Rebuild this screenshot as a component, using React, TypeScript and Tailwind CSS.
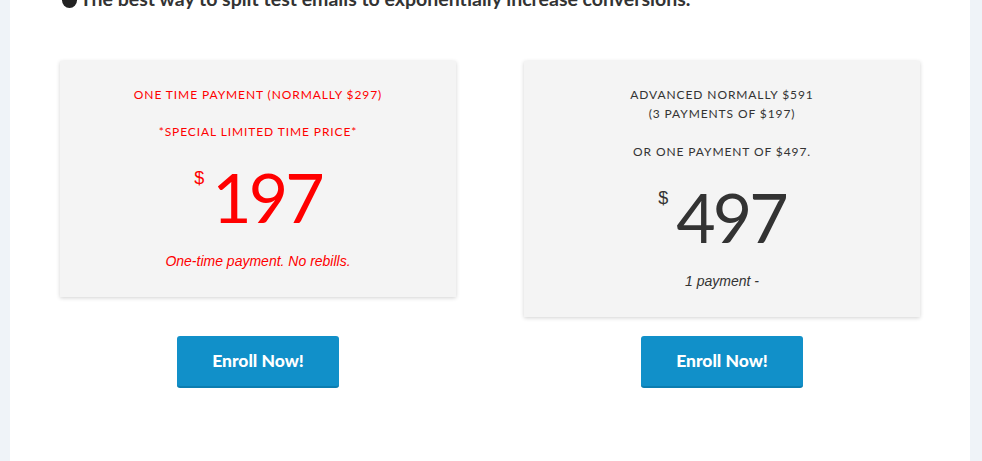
import React from "react";

const Card = ({ red, lines, price, note }: { red?: boolean; lines: React.ReactNode; price: string; note: string }) => {
  const color = red ? "text-[#ff0000]" : "text-[#333333]";
  return (
    <div className="bg-[#f4f4f4] shadow-[0_1px_4px_rgba(0,0,0,0.18)] pt-[24px] pb-[27px] flex flex-col items-center">
      <div className={`font-['Lato',sans-serif] text-[12px] uppercase tracking-[0.9px] leading-[19px] text-center ${color}`}>
        {lines}
      </div>
      <div className={`flex items-start mt-[20px] font-['Lato',sans-serif] ${color}`}>
        <span className="text-[18px] leading-none mt-[8px] mr-[8px] font-['Liberation_Sans',sans-serif]">$</span>
        <span className="text-[68px] leading-[72px] tracking-[-3px]">{price}</span>
      </div>
      <p className={`mt-[19px] font-['Liberation_Sans',sans-serif] italic text-[14px] leading-[18px] ${color}`}>
        {note}
      </p>
    </div>
  );
};

const EnrollButton = () => (
  <button className="w-[162px] h-[52px] rounded-[3px] bg-[#1190c9] border-b-2 border-[#0c7db0] text-white font-['Lato',sans-serif] font-black text-[17.5px]">
    Enroll Now!
  </button>
);

export default function App() {
  return (
    <div className="h-[461px] overflow-hidden bg-[#eff3f8] pl-[10px] pr-[12px]">
      <div className="bg-white h-full px-[50px] flex flex-col">
        <p className="-mt-[12px] font-['Lato',sans-serif] font-bold text-[19.5px] leading-[22px] text-[#333333] flex items-center gap-[3px]">
          <span className="inline-block w-[15px] h-[15px] rounded-full bg-[#222222] mt-[2px] ml-[2px]" />
          <span>The best way to split test emails to exponentially increase conversions.</span>
        </p>
        <div className="grid grid-cols-2 gap-x-[68px] items-start mt-[51px]">
          <Card
            red
            lines={
              <>
                <p>One time payment (normally $297)</p>
                <p className="mt-[18px]">*Special limited time price*</p>
              </>
            }
            price="197"
            note="One-time payment. No rebills."
          />
          <Card
            lines={
              <>
                <p>Advanced normally $591</p>
                <p>(3 payments of $197)</p>
                <p className="mt-[19px]">or one payment of $497.</p>
              </>
            }
            price="497"
            note="1 payment -"
          />
        </div>
        <div className="grid grid-cols-2 gap-x-[68px] mt-[19px]">
          <div className="flex justify-center">
            <EnrollButton />
          </div>
          <div className="flex justify-center">
            <EnrollButton />
          </div>
        </div>
      </div>
    </div>
  );
}
